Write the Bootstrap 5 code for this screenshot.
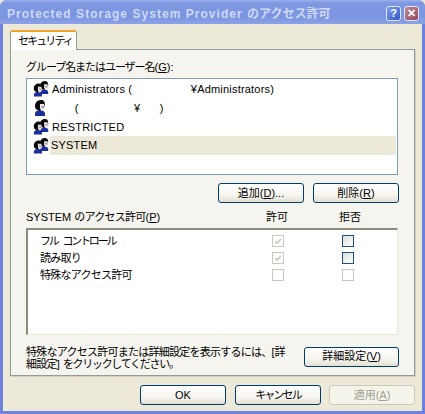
<!DOCTYPE html>
<html lang="ja"><head><meta charset="utf-8"><title>Protected Storage System Provider のアクセス許可</title>
<link rel="stylesheet" href="https://cdn.jsdelivr.net/npm/bootstrap@5.3.0/dist/css/bootstrap.min.css">
<style>
html,body{margin:0;height:414px;width:425px;overflow:hidden;background:#ece9d8}
body{font:11px/14px "Liberation Sans","Noto Sans CJK JP",sans-serif;color:#000}
.ja{letter-spacing:-.75px}
.ja2{letter-spacing:-1.05px}
.ja3{letter-spacing:-1.3px}
.kana{letter-spacing:-1.9px}
.fc{word-spacing:4px;letter-spacing:-2.2px}
.win{width:425px;height:414px;background:#ece9d8;border:solid #6f83dc;border-width:0 3px 3px 3px;border-radius:7px 7px 0 0}
.tbar{height:24px;margin:0 -3px;padding:4px 6px 0 7px;border-radius:7px 7px 0 0;background:linear-gradient(#9db0ec 0,#7f98e2 12%,#7b95e0 70%,#8ba2e6 100%)}
.ttl{color:#cfd9f6;font:bold 12px/20px "Liberation Sans","Noto Sans CJK JP",sans-serif;letter-spacing:1.04px;white-space:nowrap}
.ttl span{letter-spacing:0}
.wctl{gap:3px;padding-top:2px}
.cbtn{width:15px;height:15px;border:1px solid #dfe6fa;border-radius:3px;color:#fff;font:bold 11px/13px "Liberation Sans",sans-serif;text-align:center}
.hlp{background:linear-gradient(135deg,#7f9bf0,#3259c4)}
.cls{background:linear-gradient(135deg,#c08a98,#94455c)}
.body{padding:6px 7px 0}
.tabx{width:67px;height:20px;margin-bottom:-1px;background:#fff;border:1px solid #919b9c;border-bottom:0;border-top:2px solid #f3a32a;border-radius:3px 3px 0 0;padding:3px 0 0 7px;position:relative;z-index:1;line-height:13px;white-space:nowrap}
.pane{height:327px;background:#f5f4ee;border:1px solid #919b9c;padding:10px 15px 0;box-shadow:1px 1px 0 #d0cdbc}
.lbl{height:14px;line-height:14px}
.lst{height:97px;margin-top:4px;width:372px;background:#fff;border:1px solid #7f9db9;padding:0 1px 0 6px}
.it{height:19px;display:flex;align-items:center;white-space:pre}
.it svg{flex:none;width:16px;height:16px;margin-right:1px}
.it span{padding-left:2px;letter-spacing:.2px}
.it.sel span{flex:1;background:#ece9d8;height:19px;line-height:19px;padding-left:1px}
.xbtn{width:86px;height:20px;padding:0;border:1px solid #003c74;border-radius:3px;background:linear-gradient(#fff,#f6f5ef 60%,#e3e0d3);font-size:11px;line-height:17px;color:#000;text-align:center}
.xbtn.off{border-color:#cbc8b8;background:#f5f4ea;color:#a1a192}
.acts{margin-top:8px;width:373px;gap:9px}
.phead{margin-top:7px;width:372px;height:18px}
.phead .c1{width:216px;white-space:nowrap}.phead .c2{width:70px;text-align:center}.phead .c3{width:76px;text-align:center}
.perm{height:107px;width:372px;background:#fff;border:1px solid #ece9d8;border-top:2px solid #8d8b7e;border-left:2px solid #8d8b7e;padding:2px 0 0 12px}
.pr{height:17px;display:flex;align-items:center;white-space:nowrap}
.pr .n{width:232px}
.bx{width:12px;height:12px;border:1px solid #c9c7ba;background:#fff;flex:none;display:block}
.bx svg{display:block;width:10px;height:10px}
.bx.on{border-color:#1c5180;background:linear-gradient(135deg,#dcdcd7,#fff)}
.g1{margin-right:58px}
.foot{margin-top:8px;width:373px;display:flex;align-items:center;justify-content:space-between}
.foot p{margin:3px 0 0;line-height:12px;white-space:nowrap}
.foot .xbtn{width:95px}
.bot{margin-top:9px;width:405px;gap:9px;padding-left:130px}
.bot .off{margin-left:-1px}
u{text-underline-offset:1px}
</style></head><body>
<svg width="0" height="0" class="d-block position-fixed"><defs>
<g id="one"><path d="M1 14c0-3 3-4 5-4s5 1 5 4v2H1z" fill="#1a2f9c"/><path d="M1 6C1 2 4 0 7 0c3 0 4 2 4 5 0 2-1 3-2 4l-3 2-2-1C2 10 1 8 1 6z" fill="#0a0a0a"/><path d="M6 4h4l1 3-1 3-3 1-1-3z" fill="#f4e2d8"/><path d="M7 6h3v2H8z" fill="#7f9bd8"/></g>
<g id="two"><g transform="translate(6.200 0) scale(.82)"><use href="#one"/></g><g transform="translate(0 2.500) scale(.82)"><use href="#one"/></g></g>
</defs></svg>
<div class="win">
<div class="tbar d-flex align-items-start justify-content-between">
<div class="ttl">Protected Storage System Provider <span>のアクセス許可</span></div>
<div class="d-flex wctl ms-auto"><div class="cbtn hlp">?</div><div class="cbtn cls">✕</div></div>
</div>
<div class="body">
<div class="tabx"><span class="kana">セキュリティ</span></div>
<div class="pane">
<div class="lbl"><span class="ja2">グループ名またはユーザー名</span>(<u>G</u>):</div>
<div class="lst">
<div class="it"><svg viewBox="0 0 16 16"><use href="#two"/></svg><span>Administrators (                  ¥Administrators)</span></div>
<div class="it"><svg viewBox="0 0 16 16"><use href="#one" x="1" y="0"/></svg><span>       (                 ¥      )</span></div>
<div class="it"><svg viewBox="0 0 16 16"><use href="#two"/></svg><span>RESTRICTED</span></div>
<div class="it sel"><svg viewBox="0 0 16 16"><use href="#two"/></svg><span>SYSTEM</span></div>
</div>
<div class="d-flex justify-content-end acts"><button class="xbtn" type="button">追加(<u>D</u>)...</button><button class="xbtn" type="button">削除(<u>R</u>)</button></div>
<div class="d-flex phead"><div class="c1">SYSTEM <span class="ja">のアクセス許可</span>(<u>P</u>)</div><div class="c2">許可</div><div class="c3">拒否</div></div>
<div class="perm">
<div class="pr"><span class="n fc">フル コントロール</span><span class="bx g1"><svg viewBox="0 0 10 10"><path d="M2 5l2 2 4-4" fill="none" stroke="#c9c7ba" stroke-width="1.600"/></svg></span><span class="bx on"></span></div>
<div class="pr"><span class="n ja">読み取り</span><span class="bx g1"><svg viewBox="0 0 10 10"><path d="M2 5l2 2 4-4" fill="none" stroke="#c9c7ba" stroke-width="1.600"/></svg></span><span class="bx on"></span></div>
<div class="pr"><span class="n ja">特殊なアクセス許可</span><span class="bx g1"></span><span class="bx"></span></div>
</div>
<div class="foot"><p><span class="ja">特殊なアクセス許可または詳細設定を表示するには、</span>[<span class="ja">詳<br>細設定</span>] <span class="ja3">をクリックしてください。</span></p><button class="xbtn" type="button">詳細設定(<u>V</u>)</button></div>
</div>
<div class="d-flex bot"><button class="xbtn" type="button">OK</button><button class="xbtn" type="button"><span class="kana">キャンセル</span></button><button class="xbtn off" type="button" disabled>適用(<u>A</u>)</button></div>
</div>
</div>
</body></html>
